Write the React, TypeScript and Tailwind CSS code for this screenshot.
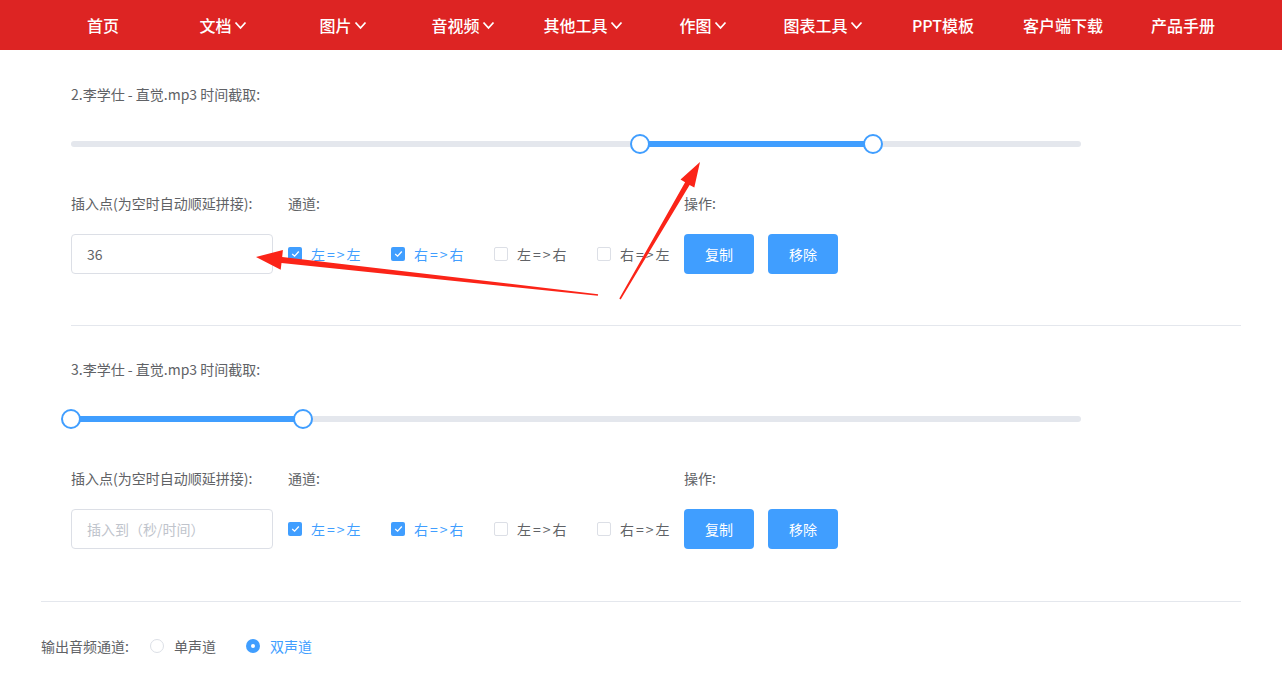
import React from "react";

const FONT = { fontFamily: '"Microsoft YaHei", "Noto Sans CJK SC", "Noto Sans", sans-serif' };

const NAV = [
  { label: "首页" },
  { label: "文档", menu: true },
  { label: "图片", menu: true },
  { label: "音视频", menu: true },
  { label: "其他工具", menu: true },
  { label: "作图", menu: true },
  { label: "图表工具", menu: true },
  { label: "PPT模板" },
  { label: "客户端下载" },
  { label: "产品手册" },
];

const CHANNELS = [
  { label: "左=>左", checked: true },
  { label: "右=>右", checked: true },
  { label: "左=>右", checked: false },
  { label: "右=>左", checked: false },
];

function Chevron() {
  return (
    <svg width="13" height="9" viewBox="0 0 13 9" className="ml-[2px]">
      <path d="M1.5 1.5 L6.5 7 L11.5 1.5" fill="none" stroke="white" strokeWidth="1.8" />
    </svg>
  );
}

function Header() {
  return (
    <header className="h-[50px] bg-[#dd2423] flex items-center pl-[43px]">
      {NAV.map((n) => (
        <div key={n.label} className="w-[120px] flex items-center justify-center text-white text-[16px] font-medium">
          <span>{n.label}</span>
          {n.menu && <Chevron />}
        </div>
      ))}
    </header>
  );
}

function Slider({ from, to }: { from: number; to: number }) {
  const total = 1010;
  return (
    <div className="relative h-[38px] w-[1010px] flex items-center">
      <div className="h-[6px] w-full rounded-full bg-[#e4e7ed]" />
      <div
        className="absolute h-[6px] bg-[#409eff]"
        style={{ left: (from / total) * 100 + "%", width: ((to - from) / total) * 100 + "%" }}
      />
      {[from, to].map((p) => (
        <div
          key={p}
          className="absolute top-1/2 h-[20px] w-[20px] -translate-x-1/2 -translate-y-1/2 rounded-full border-2 border-[#409eff] bg-white"
          style={{ left: p }}
        />
      ))}
    </div>
  );
}

function Checkbox({ label, checked }: { label: string; checked: boolean }) {
  return (
    <div className="w-[103px] shrink-0 flex items-center">
      {checked ? (
        <span className="h-[14px] w-[14px] rounded-[2px] bg-[#409eff] flex items-center justify-center">
          <svg width="9" height="8" viewBox="0 0 9 8">
            <path d="M1.2 4 L3.6 6.2 L7.8 1.5" fill="none" stroke="white" strokeWidth="1.3" />
          </svg>
        </span>
      ) : (
        <span className="h-[14px] w-[14px] rounded-[2px] border border-[#dcdfe6] bg-white" />
      )}
      <span className={"ml-[9px] text-[14px] tracking-[2px] " + (checked ? "text-[#409eff]" : "text-[#606266]")}>
        {label}
      </span>
    </div>
  );
}

function Clip({ index, from, to, value }: { index: number; from: number; to: number; value?: string }) {
  return (
    <div className="pl-[30px]">
      <div className="h-[20px] leading-[20px] text-[14px] text-[#606266]">{index}.李学仕 - 直觉.mp3 时间截取:</div>
      <div className="mt-[21px]">
        <Slider from={from} to={to} />
      </div>
      <div className="mt-[30px] flex text-[14px] text-[#606266]">
        <div className="w-[202px] shrink-0">
          <div className="h-[20px] leading-[20px]">插入点(为空时自动顺延拼接):</div>
          <div className="mt-[21px] h-[40px] rounded-[4px] border border-[#dcdfe6] flex items-center px-[15px]">
            {value ? (
              <span className="text-[#606266]">{value}</span>
            ) : (
              <span className="text-[#c0c4cc]">插入到（秒/时间）</span>
            )}
          </div>
        </div>
        <div className="ml-[15px] w-[381px] shrink-0">
          <div className="h-[20px] leading-[20px]">通道:</div>
          <div className="mt-[21px] h-[40px] flex items-center">
            {CHANNELS.map((c) => (
              <Checkbox key={c.label} {...c} />
            ))}
          </div>
        </div>
        <div className="ml-[15px]">
          <div className="h-[20px] leading-[20px]">操作:</div>
          <div className="mt-[21px] flex gap-[14px]">
            <button className="h-[40px] w-[70px] rounded-[4px] bg-[#409eff] text-white text-[14px]">复制</button>
            <button className="h-[40px] w-[70px] rounded-[4px] bg-[#409eff] text-white text-[14px]">移除</button>
          </div>
        </div>
      </div>
    </div>
  );
}

// tapered annotation arrow, thin at the tail and widening to the head
function arrow(tail: [number, number], tip: [number, number], headLen: number, headHalf: number, shaftHead: number, shaftTail: number) {
  const dx = tip[0] - tail[0];
  const dy = tip[1] - tail[1];
  const len = Math.hypot(dx, dy);
  const ux = dx / len, uy = dy / len;
  const nx = -uy, ny = ux;
  const bx = tip[0] - ux * headLen, by = tip[1] - uy * headLen;
  const pts = [
    [tail[0] + nx * shaftTail, tail[1] + ny * shaftTail],
    [bx + nx * shaftHead, by + ny * shaftHead],
    [bx + nx * headHalf, by + ny * headHalf],
    tip,
    [bx - nx * headHalf, by - ny * headHalf],
    [bx - nx * shaftHead, by - ny * shaftHead],
    [tail[0] - nx * shaftTail, tail[1] - ny * shaftTail],
  ];
  return pts.map((p) => p[0].toFixed(1) + "," + p[1].toFixed(1)).join(" ");
}

export default function App() {
  return (
    <div className="relative min-h-[673px] bg-white" style={FONT}>
      <Header />
      <main className="px-[41px] pt-[34px]">
        <Clip index={2} from={569} to={802} value="36" />
        <div className="ml-[30px] mt-[51px] border-t border-[#e4e7ed]" />
        <div className="mt-[33px]">
          <Clip index={3} from={0} to={232} />
        </div>
        <div className="mt-[52px] border-t border-[#e4e7ed]" />
        <div className="mt-[34px] h-[20px] flex items-center text-[14px] text-[#606266]">
          <span>输出音频通道:</span>
          <span className="ml-[21px] h-[14px] w-[14px] rounded-full border border-[#dcdfe6]" />
          <span className="ml-[10px]">单声道</span>
          <span className="ml-[30px] h-[14px] w-[14px] rounded-full bg-[#409eff] flex items-center justify-center">
            <span className="h-[4px] w-[4px] rounded-full bg-white" />
          </span>
          <span className="ml-[10px] text-[#409eff]">双声道</span>
        </div>
      </main>
      <svg className="pointer-events-none absolute left-0 top-0" width="1282" height="673">
        <polygon points={arrow([598, 295], [256, 257], 26, 10, 3, 0.8)} fill="#fb2418" />
        <polygon points={arrow([620, 299], [700, 162], 25, 8, 2.6, 0.8)} fill="#fb2418" />
      </svg>
    </div>
  );
}
